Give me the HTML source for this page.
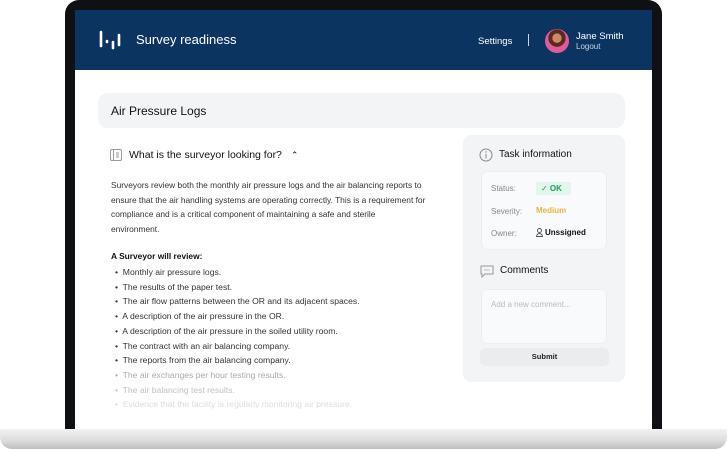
<!DOCTYPE html>
<html><head><meta charset="utf-8"><style>
*{margin:0;padding:0;box-sizing:border-box}
body{width:727px;height:449px;background:#fff;font-family:"Liberation Sans",sans-serif;position:relative;overflow:hidden;color:#222}
.abs{position:absolute}
.bezel{left:65px;top:0;width:597px;height:432px;background:#0e1013;border-radius:14px 14px 0 0}
.screen{left:75px;top:10px;width:577px;height:420px;background:#fff;overflow:hidden}
.hdr{left:0;top:0;width:577px;height:60px;background:#0b3560}
.base{left:0;top:429px;width:727px;height:20px;background:linear-gradient(#f2f2f2,#dcdcdc 60%,#bdbdbd);border-radius:2px 2px 12px 12px}
.t{position:absolute;white-space:nowrap}
</style></head><body>
<div class="abs bezel"></div>
<div class="abs screen">
 <div class="abs hdr">
  <svg class="abs" style="left:24px;top:20px" width="22" height="20"><g stroke="#fff" stroke-width="2.6" stroke-linecap="round"><line x1="2" y1="2" x2="2" y2="16"/><line x1="8" y1="11" x2="8" y2="12"/><line x1="14" y1="12" x2="14" y2="18"/><line x1="20" y1="5" x2="20" y2="15"/></g></svg>
  <div class="t" style="left:61px;top:22px;font-size:13px;color:#fff">Survey readiness</div>
  <div class="t" style="left:403px;top:26px;font-size:9.5px;color:#fff">Settings</div>
  <div class="abs" style="left:453px;top:24px;width:1px;height:12px;background:#cfd8e3"></div>
  <div class="abs" style="left:470px;top:19px;width:24px;height:24px;border-radius:50%;background:radial-gradient(circle at 50% 38%,#c98a6a 0 24%,#5a2a1e 25% 45%,#e25a9a 46%);"></div>
  <div class="t" style="left:501px;top:21px;font-size:9.5px;color:#fff">Jane Smith</div>
  <div class="t" style="left:501px;top:32px;font-size:8px;color:#c9d3df">Logout</div>
 </div>
 <div class="abs" style="left:23px;top:83px;width:527px;height:35px;background:#f3f4f5;border-radius:10px"></div>
 <div class="t" style="left:36px;top:94px;font-size:12px;color:#111">Air Pressure Logs</div>

 <svg class="abs" style="left:35px;top:139px" width="12" height="12"><rect x="0.5" y="0.5" width="11" height="11" rx="1.5" fill="none" stroke="#999"/><line x1="3.5" y1="1" x2="3.5" y2="11" stroke="#999"/><g stroke="#999"><line x1="6" y1="4" x2="9" y2="4"/><line x1="6" y1="6" x2="9" y2="6"/><line x1="6" y1="8" x2="9" y2="8"/></g></svg>
 <div class="t" style="left:54px;top:139px;font-size:10.5px;color:#111">What is the surveyor looking for? <span style="margin-left:6px;font-size:9px">&#8963;</span></div>
 <div class="t" style="left:36px;top:168px;line-height:14.5px;font-size:8.4px;color:#333">Surveyors review both the monthly air pressure logs and the air balancing reports to<br>ensure that the air handling systems are operating correctly. This is a requirement for<br>compliance and is a critical component of maintaining a safe and sterile<br>environment.</div>
 <div class="t" style="left:36px;top:241px;font-size:8.4px;font-weight:bold;color:#111">A Surveyor will review:</div>
 <div class="abs" style="left:40px;top:255px;line-height:14.7px;font-size:8.6px;white-space:nowrap">
  <div style="color:#333">•&nbsp; Monthly air pressure logs.</div>
  <div style="color:#333">•&nbsp; The results of the paper test.</div>
  <div style="color:#333">•&nbsp; The air flow patterns between the OR and its adjacent spaces.</div>
  <div style="color:#333">•&nbsp; A description of the air pressure in the OR.</div>
  <div style="color:#333">•&nbsp; A description of the air pressure in the soiled utility room.</div>
  <div style="color:#333">•&nbsp; The contract with an air balancing company.</div>
  <div style="color:#333">•&nbsp; The reports from the air balancing company.</div>
  <div style="color:#aaa">•&nbsp; The air exchanges per hour testing results.</div>
  <div style="color:#c2c2c2">•&nbsp; The air balancing test results.</div>
  <div style="color:#ddd">•&nbsp; Evidence that the facility is regularly monitoring air pressure.</div>
 </div>

 <div class="abs" style="left:388px;top:125px;width:162px;height:247px;background:#f3f4f5;border-radius:8px"></div>
 <svg class="abs" style="left:404px;top:138px" width="14" height="14"><circle cx="7" cy="7" r="6" fill="none" stroke="#888"/><line x1="7" y1="6" x2="7" y2="10.5" stroke="#888"/><circle cx="7" cy="4" r="0.7" fill="#888"/></svg>
 <div class="t" style="left:424px;top:139px;font-size:10px;color:#111">Task information</div>
 <div class="abs" style="left:406px;top:161px;width:126px;height:79px;background:#f9fafb;border-radius:6px;border:1px solid #eceef0"></div>
 <div class="t" style="left:416px;top:174px;font-size:8px;color:#888">Status:</div>
 <div class="abs" style="left:461px;top:172px;width:35px;height:13px;background:#e3f6ec;border-radius:2px"></div>
 <div class="t" style="left:466px;top:174px;font-size:8px;color:#1e9e5c;font-weight:bold"><span style="font-weight:normal">✓</span> OK</div>
 <div class="t" style="left:416px;top:197px;font-size:8px;color:#888">Severity:</div>
 <div class="t" style="left:461px;top:196px;font-size:8px;color:#f0b43c;font-weight:bold">Medium</div>
 <div class="t" style="left:416px;top:219px;font-size:8px;color:#888">Owner:</div>
 <svg class="abs" style="left:461px;top:218px" width="7" height="9"><circle cx="3.5" cy="2.5" r="2" fill="none" stroke="#555" stroke-width=".9"/><path d="M.5 8.5a3 3 0 0 1 6 0z" fill="none" stroke="#555" stroke-width=".9"/></svg>
 <div class="t" style="left:470px;top:218px;font-size:8px;color:#111;font-weight:bold">Unssigned</div>
 <svg class="abs" style="left:405px;top:255px" width="14" height="13"><path d="M1 1h12v8H5l-3 3V9H1z" fill="none" stroke="#999"/><g fill="#999"><circle cx="5" cy="5" r=".6"/><circle cx="7" cy="5" r=".6"/><circle cx="9" cy="5" r=".6"/></g></svg>
 <div class="t" style="left:425px;top:255px;font-size:10px;color:#111">Comments</div>
 <div class="abs" style="left:406px;top:279px;width:126px;height:55px;background:#f9fafb;border-radius:6px;border:1px solid #eceef0"></div>
 <div class="t" style="left:416px;top:290px;font-size:8px;color:#bbb">Add a new comment...</div>
 <div class="abs" style="left:405px;top:338px;width:129px;height:18px;background:#ebecee;border-radius:5px"></div>
 <div class="t" style="left:405px;top:342px;width:129px;text-align:center;font-size:7.5px;font-weight:bold;color:#222">Submit</div>
</div>
<div class="abs base"></div>
</body></html>
